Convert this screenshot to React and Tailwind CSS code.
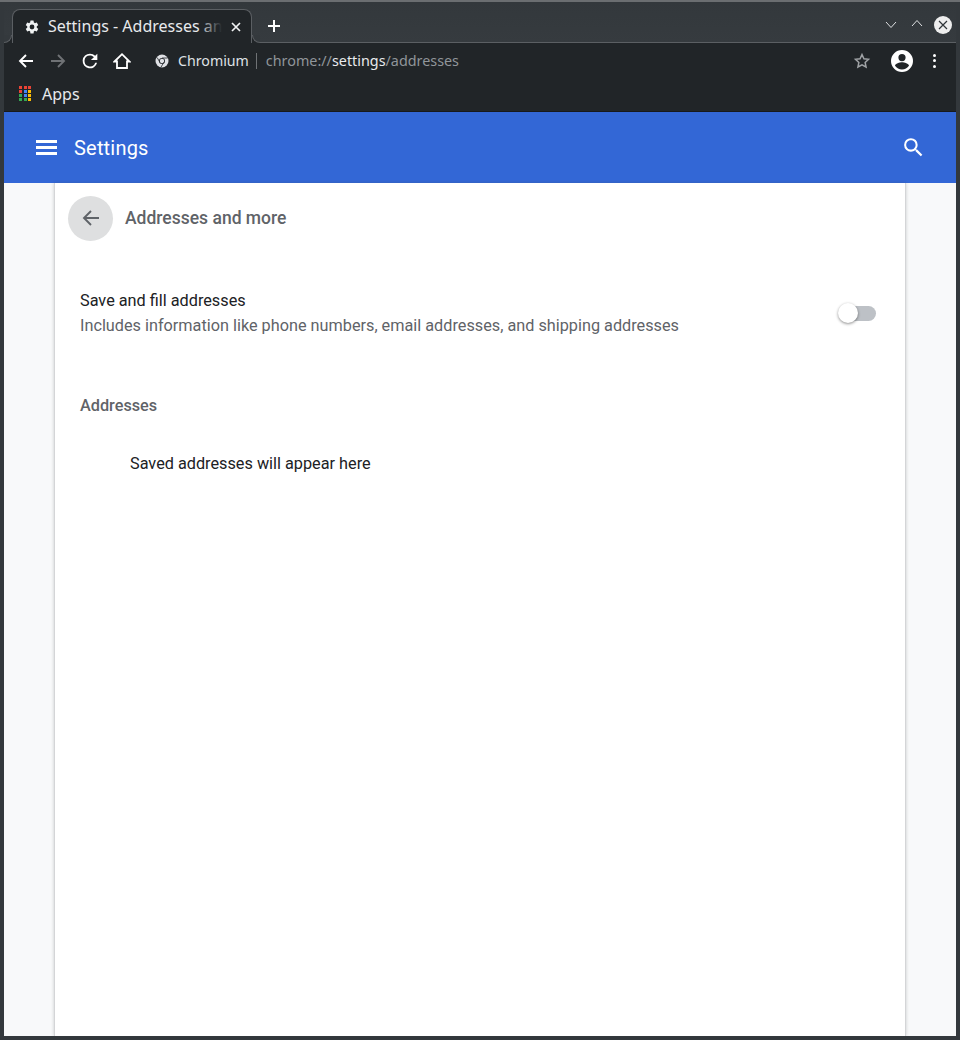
const UI_FONT = "font-['Noto_Sans',sans-serif]";

const AppsIcon = () => {
  const colors = ["#ea4335", "#ea4335", "#ea4335", "#ea4335", "#4285f4", "#fbbc04", "#34a853", "#4285f4", "#fbbc04", "#34a853", "#34a853", "#fbbc04"];
  return (
    <div className="grid grid-cols-3 gap-px w-[13px] h-[15px] shrink-0">
      {colors.map((c, i) => (
        <span key={i} className="block w-[3px] h-[3px]" style={{ backgroundColor: c }} />
      ))}
    </div>
  );
};

const ChromiumIcon = () => (
  <svg width="14" height="14" viewBox="0 0 14 14" className="shrink-0">
    <circle cx="7" cy="7" r="6.5" fill="#dfe1e5" />
    <circle cx="7" cy="7" r="3" fill="#212528" />
    <circle cx="7" cy="7" r="2.2" fill="#dfe1e5" />
    <path d="M7 4H12.6M5 8.6L2.2 3.6M8.9 8.2L6 13.2" stroke="#212528" strokeWidth="0.8" fill="none" />
  </svg>
);

const Tab = () => (
  <div className="relative z-10 ml-[8px] mt-[7px] w-[240px] h-[34px] bg-[#212528] border border-b-0 border-[#5b5f63] rounded-t-[8px] flex items-center pl-[11px] pr-[10px]">
    {/* flared corners where the tab meets the toolbar */}
    <div className="absolute -left-[9px] bottom-0 w-[8px] h-[8px] bg-[#212528]">
      <div className="w-full h-full bg-[#34393d] rounded-br-[8px] border-r border-b border-[#5b5f63]" />
    </div>
    <div className="absolute -right-[9px] bottom-0 w-[8px] h-[8px] bg-[#212528]">
      <div className="w-full h-full bg-[#34393d] rounded-bl-[8px] border-l border-b border-[#5b5f63]" />
    </div>
    <svg width="16" height="16" viewBox="0 0 24 24" fill="#f1f3f4" className="shrink-0">
      <path d="M19.14 12.94c.04-.3.06-.61.06-.94s-.02-.64-.07-.94l2.03-1.58a.5.5 0 0 0 .12-.61l-1.92-3.32a.5.5 0 0 0-.59-.22l-2.39.96a7 7 0 0 0-1.62-.94l-.36-2.54a.48.48 0 0 0-.48-.41h-3.84a.48.48 0 0 0-.47.41l-.36 2.54c-.59.24-1.13.57-1.62.94l-2.39-.96a.49.49 0 0 0-.59.22L2.74 8.87a.48.48 0 0 0 .12.61l2.03 1.58c-.05.3-.09.63-.09.94s.02.64.07.94l-2.03 1.58a.5.5 0 0 0-.12.61l1.92 3.32c.12.22.37.29.59.22l2.39-.96c.5.38 1.03.7 1.62.94l.36 2.54c.05.24.24.41.48.41h3.84c.24 0 .44-.17.47-.41l.36-2.54c.59-.24 1.13-.56 1.62-.94l2.39.96c.22.08.47 0 .59-.22l1.92-3.32a.48.48 0 0 0-.12-.61zM12 15.6A3.6 3.6 0 1 1 12 8.4a3.6 3.6 0 0 1 0 7.2z" />
    </svg>
    <div className="relative ml-[8px] -mt-[1px] flex-1 overflow-hidden whitespace-nowrap text-[16px] leading-[22px] text-[#e8eaed]">
      Settings - Addresses and more
      <span className="absolute right-0 top-0 h-full w-[24px] bg-gradient-to-r from-transparent to-[#212528]" />
    </div>
    <svg width="10" height="10" viewBox="0 0 10 10" className="ml-[9px] shrink-0" stroke="#f1f3f4" strokeWidth="1.7">
      <path d="M1 1L9 9M9 1L1 9" />
    </svg>
  </div>
);

const TabStrip = () => (
  <div className="h-[40px] flex items-start bg-gradient-to-b from-[#33383c] to-[#363b3f] relative">
    <Tab />
    <svg width="14" height="14" viewBox="0 0 14 14" className="ml-[15px] mt-[17px]" stroke="#ffffff" strokeWidth="2">
      <path d="M7 1V13M1 7H13" />
    </svg>
    <div className="ml-auto mr-[4px] mt-[14px] flex items-center">
      <svg width="12" height="8" viewBox="0 0 12 8" fill="none" stroke="#dfe1e3" strokeWidth="1">
        <path d="M1 1L6 6.5L11 1" />
      </svg>
      <svg width="12" height="8" viewBox="0 0 12 8" fill="none" stroke="#dfe1e3" strokeWidth="1" className="ml-[14px] -mt-[4px]">
        <path d="M1 7L6 1.5L11 7" />
      </svg>
      <div className="ml-[11px] w-[18px] h-[18px] rounded-full bg-[#eeeeee] flex items-center justify-center">
        <svg width="10" height="10" viewBox="0 0 10 10" stroke="#2f3438" strokeWidth="1.2">
          <path d="M1 1L9 9M9 1L1 9" />
        </svg>
      </div>
    </div>
  </div>
);

const Toolbar = () => (
  <div className="h-[36px] flex items-center bg-[#212528] border-t border-[#5b5f63]">
    <svg width="16" height="16" viewBox="0 0 16 16" fill="none" stroke="#ffffff" strokeWidth="1.9" className="ml-[14px]">
      <path d="M15 8H2M8 2L2 8L8 14" />
    </svg>
    <svg width="16" height="16" viewBox="0 0 16 16" fill="none" stroke="#6f7275" strokeWidth="1.9" className="ml-[16px]">
      <path d="M1 8H14M8 2L14 8L8 14" />
    </svg>
    <svg width="22" height="22" viewBox="0 0 24 24" fill="#ffffff" className="ml-[13px]">
      <path d="M17.65 6.35A7.96 7.96 0 0 0 12 4a8 8 0 1 0 7.73 10h-2.08A6 6 0 1 1 12 6c1.66 0 3.14.69 4.22 1.78L13 11h7V4z" />
    </svg>
    <svg width="18" height="18" viewBox="0 0 18 18" fill="none" stroke="#ffffff" strokeWidth="1.8" className="ml-[12px]">
      <path d="M1.5 9.5L9 2.2L16.5 9.5H14V16H4V9.5Z" />
    </svg>
    <div className="ml-[24px]"><ChromiumIcon /></div>
    <span className="ml-[9px] text-[14.2px] leading-[20px] text-[#dfe1e5]">Chromium</span>
    <span className="ml-[7px] w-px h-[16px] bg-[#6f7275]" />
    <span className="ml-[9px] text-[14.35px] leading-[20px] text-[#90959a]">
      chrome://<span className="text-[#e8eaed]">settings</span>/addresses
    </span>
    <svg width="18" height="18" viewBox="0 0 24 24" fill="none" stroke="#9fa2a5" strokeWidth="2" className="ml-auto">
      <path d="M12 3.5l2.6 5.6 6.1.7-4.5 4.2 1.2 6L12 17l-5.4 3 1.2-6-4.5-4.2 6.1-.7z" />
    </svg>
    <svg width="24" height="24" viewBox="0 0 24 24" fill="#ffffff" className="ml-[19px]">
      <path d="M12 1a11 11 0 1 0 0 22a11 11 0 0 0 0-22zm0 4a3.6 3.6 0 1 1 0 7.2a3.6 3.6 0 0 1 0-7.2zm0 15.4a8.6 8.6 0 0 1-7-3.6c.1-2.3 4.7-3.5 7-3.5s6.9 1.2 7 3.5a8.6 8.6 0 0 1-7 3.6z" />
    </svg>
    <div className="ml-[19px] mr-[20px] flex flex-col gap-[2.5px]">
      <span className="block w-[3px] h-[3px] rounded-full bg-white" />
      <span className="block w-[3px] h-[3px] rounded-full bg-white" />
      <span className="block w-[3px] h-[3px] rounded-full bg-white" />
    </div>
  </div>
);

const BookmarkBar = () => (
  <div className="h-[34px] flex items-center bg-[#212528] pl-[15px] pb-[2px] border-b border-[#17191c]">
    <AppsIcon />
    <span className="ml-[10px] text-[16px] leading-[20px] text-[#e8eaed]">Apps</span>
  </div>
);

const SettingsHeader = () => (
  <div className="h-[71px] shrink-0 bg-[#3367d6] flex items-center font-['Roboto',sans-serif]">
    <div className="ml-[32px] flex flex-col gap-[3.5px] w-[21px]">
      <span className="block h-[2.5px] bg-white" />
      <span className="block h-[2.5px] bg-white" />
      <span className="block h-[2.5px] bg-white" />
    </div>
    <h1 className="ml-[17px] text-[20px] leading-[28px] text-white tracking-[0.2px] font-normal">Settings</h1>
    <svg width="25" height="25" viewBox="0 0 24 24" fill="#ffffff" className="ml-auto mr-[30px]">
      <path d="M15.5 14h-.79l-.28-.27A6.47 6.47 0 0 0 16 9.5 6.5 6.5 0 1 0 9.5 16c1.61 0 3.09-.59 4.23-1.57l.27.28v.79l5 4.99L20.49 19l-4.99-5zm-6 0C7.01 14 5 11.99 5 9.5S7.01 5 9.5 5 14 7.01 14 9.5 11.99 14 9.5 14z" />
    </svg>
  </div>
);

const Toggle = () => (
  <div className="relative w-[38px] h-[20px] shrink-0">
    <div className="absolute right-0 top-[3px] w-[34px] h-[15px] rounded-full bg-[#bdc1c6]" />
    <div className="absolute left-0 top-0 w-[20px] h-[20px] rounded-full bg-white shadow-[0_1px_3px_rgba(0,0,0,0.45)]" />
  </div>
);

const SettingsCard = () => (
  <div className="w-[852px] h-full bg-white border-x border-[#d4d5d7] shadow-[0_0_3px_rgba(60,64,67,0.25)] font-['Roboto',sans-serif]">
    <div className="flex items-center h-[70px] pl-[13px]">
      <div className="w-[45px] h-[45px] rounded-full bg-[#dedfe0] flex items-center justify-center">
        <svg width="18" height="18" viewBox="0 0 18 18" fill="none" stroke="#5f6368" strokeWidth="1.9">
          <path d="M17 9H2M9 2L2 9L9 16" />
        </svg>
      </div>
      <h2 className="ml-[12px] text-[17.5px] leading-[22px] font-medium text-[#5f6368]">Addresses and more</h2>
    </div>
    <div className="mt-[35px] flex items-center pl-[25px] pr-[29px]">
      <div className="flex-1">
        <div className="text-[16.25px] leading-[25px] text-[#202124]">Save and fill addresses</div>
        <div className="text-[16.25px] leading-[25px] text-[#5f6368]">Includes information like phone numbers, email addresses, and shipping addresses</div>
      </div>
      <Toggle />
    </div>
    <h3 className="mt-[57px] pl-[25px] text-[16.25px] leading-[22px] font-medium text-[#5f6368]">Addresses</h3>
    <p className="mt-[36px] pl-[75px] text-[16.25px] leading-[22px] text-[#202124]">Saved addresses will appear here</p>
  </div>
);

export default function App() {
  return (
    <div className={`w-[960px] h-[1040px] bg-[#33383c] pt-[2px] px-[4px] pb-[4px] flex flex-col overflow-hidden ${UI_FONT}`}>
      <div className="-mx-[4px] -mt-[2px] h-[2px] shrink-0 bg-[#6b6e71]" />
      <TabStrip />
      <Toolbar />
      <BookmarkBar />
      <SettingsHeader />
      <div className="flex-1 min-h-0 bg-[#f8f9fa] pl-[50px]">
        <SettingsCard />
      </div>
    </div>
  );
}
